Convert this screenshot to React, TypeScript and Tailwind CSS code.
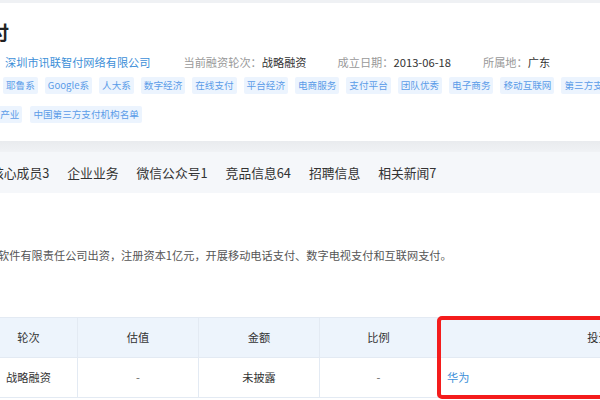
import React from "react";

const tags1 = ["耶鲁系", "Google系", "人大系", "数字经济", "在线支付", "平台经济", "电商服务", "支付平台", "团队优秀", "电子商务", "移动互联网", "第三方支付"];
const tags2 = ["数字产业", "中国第三方支付机构名单"];
const tabs = ["核心成员3", "企业业务", "微信公众号1", "竞品信息64", "招聘信息", "相关新闻7"];

function Tag({ t }: { t: string }) {
  return (
    <span className="shrink-0 h-[17px] px-[3px] flex items-center rounded-[2px] bg-[#ecf4fe] text-[#5b9ce8] text-[9.6px] leading-none whitespace-nowrap">
      {t}
    </span>
  );
}

export default function App() {
  return (
    <div
      className="w-[600px] h-[400px] overflow-hidden bg-[#eff1f4] text-[#333]"
      style={{ fontFamily: '"Noto Sans CJK SC", "Noto Sans", sans-serif' }}
    >
      <div className="pt-[3px]">
        {/* top card */}
        <div className="bg-white h-[138px] overflow-hidden">
          <div className="h-[50px] flex items-start pt-[19px] overflow-hidden">
            <h1 className="ml-[-67px] text-[19px] font-bold leading-none text-[#222] whitespace-nowrap">讯联智付</h1>
          </div>
          <div className="h-[18px] flex items-center text-[11.2px] whitespace-nowrap">
            <span className="ml-[5px] text-[#3d8fd8]">深圳市讯联智付网络有限公司</span>
            <span className="ml-[33px] text-[#999]">当前融资轮次：</span>
            <span className="text-[#333]">战略融资</span>
            <span className="ml-[31px] text-[#999]">成立日期：</span>
            <span className="text-[#333]">2013-06-18</span>
            <span className="ml-[32px] text-[#999]">所属地：</span>
            <span className="text-[#333]">广东</span>
          </div>
          <div className="mt-[6px] flex gap-[7px] ml-[3px]">
            {tags1.map((t) => (
              <Tag key={t} t={t} />
            ))}
          </div>
          <div className="mt-[12px] flex gap-[8px] ml-[-22px]">
            {tags2.map((t) => (
              <Tag key={t} t={t} />
            ))}
          </div>
        </div>

        {/* gap */}
        <div className="h-[11px] bg-gradient-to-b from-[#e9ebee] to-[#f0f2f5]" />

        {/* tab bar */}
        <div className="h-[41px] bg-[#f5f7fa] flex items-center gap-[18px] ml-[-9px] text-[12.8px] text-[#333] whitespace-nowrap">
          {tabs.map((t) => (
            <span key={t}>{t}</span>
          ))}
        </div>

        {/* content */}
        <div className="bg-white h-[210px]">
          <div className="h-[124px] flex items-end pb-[53px] ml-[-181px] text-[11.2px] text-[#555] whitespace-nowrap">
            深圳市讯联智付网络有限公司由华为软件有限责任公司出资，注册资本1亿元，开展移动电话支付、数字电视支付和互联网支付。
          </div>
          <div className="relative ml-[-20px] w-[790px]">
            <div className="flex h-[41px] bg-[#edf4fc] border-t border-b border-[#e3eaf3] text-[11.2px] text-[#333]">
              <div className="w-[98px] flex items-center justify-center border-r border-[#e3eaf3]">轮次</div>
              <div className="w-[121px] flex items-center justify-center border-r border-[#e3eaf3]">估值</div>
              <div className="w-[121px] flex items-center justify-center border-r border-[#e3eaf3]">金额</div>
              <div className="w-[118px] flex items-center justify-center border-r border-[#e3eaf3]">比例</div>
              <div className="w-[332px] flex items-center justify-center">投资方</div>
            </div>
            <div className="flex h-[40px] bg-white border-b border-[#e3eaf3] text-[11.2px] text-[#333]">
              <div className="w-[98px] flex items-center justify-center border-r border-[#e3eaf3]">战略融资</div>
              <div className="w-[121px] flex items-center justify-center border-r border-[#e3eaf3] text-[#666]">-</div>
              <div className="w-[121px] flex items-center justify-center border-r border-[#e3eaf3]">未披露</div>
              <div className="w-[118px] flex items-center justify-center border-r border-[#e3eaf3] text-[#666]">-</div>
              <div className="w-[332px] flex items-center pl-[9px] text-[#3d8fd8]">华为</div>
            </div>
            <div className="absolute left-[457px] top-[-1px] w-[220px] h-[83px] border-[4px] border-[#f41c1c] rounded-[5px]" />
          </div>
        </div>
      </div>
    </div>
  );
}
